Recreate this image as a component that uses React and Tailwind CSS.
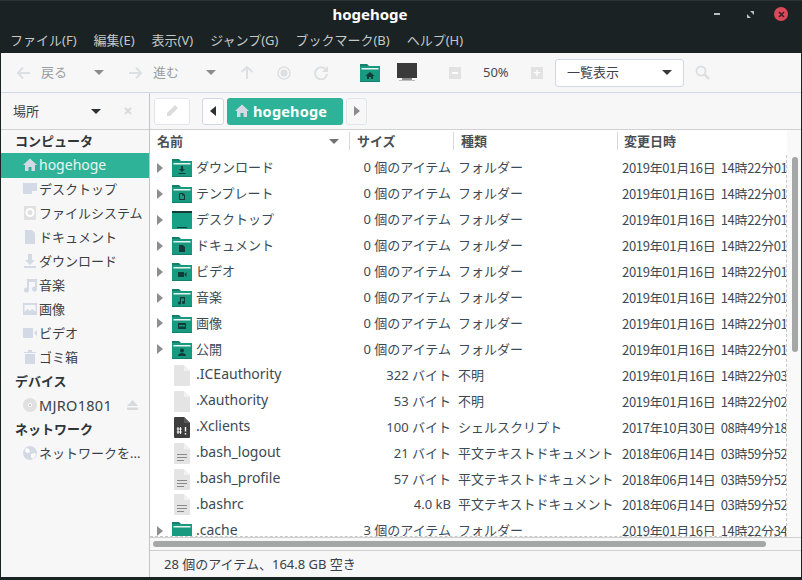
import React from "react";

const menus = ["ファイル(F)", "編集(E)", "表示(V)", "ジャンプ(G)", "ブックマーク(B)", "ヘルプ(H)"];

function Tri({ dir = "down", className = "" }) {
  const pts = { down: "0,0 10,0 5,5", left: "6,0 6,10 0,5", right: "0,0 6,5 0,10" };
  const box = dir === "down" ? [10, 5] : [6, 10];
  return (
    <svg width={box[0]} height={box[1]} viewBox={`0 0 ${box[0]} ${box[1]}`} className={className}>
      <polygon points={pts[dir]} fill="currentColor" />
    </svg>
  );
}

function Folder({ glyph }) {
  return (
    <svg width="20" height="19" viewBox="0 0 20 19" className="shrink-0">
      {glyph === "desktop" ? (
        <>
          <rect x="0" y="1" width="20" height="18" fill="#16a085" />
          <rect x="0" y="1" width="20" height="2" fill="#123b3a" />
          <rect x="5" y="17" width="10" height="1" fill="#123b3a" />
        </>
      ) : (
        <>
          <path d="M0 1h7l2 2h11v2H0z" fill="#14806c" />
          <rect x="0" y="3" width="20" height="16" rx="0.5" fill="#179a80" />
          <rect x="1.5" y="5" width="17" height="1.5" fill="#e8f3f0" />
          <rect x="0" y="18" width="20" height="1" fill="#12806c" />
          {glyph === "down" && <path d="M9 8h2v3h2l-3 3-3-3h2zM6.5 15h7v1h-7z" fill="#123b3a" />}
          {glyph === "doc" && <path d="M7 9h4l2 2v5H7zM8 10v5h4v-3.5h-2V10z" fill="#123b3a" />}
          {glyph === "docfull" && <path d="M7 9h4l2 2v5H7z" fill="#123b3a" />}
          {glyph === "video" && <path d="M6 10h6v5H6zM12.5 12l2-2v5l-2-2z" fill="#123b3a" />}
          {glyph === "music" && <path d="M8 9h5v5.5a1.5 1.5 0 1 1-1-1.4V10.5H9v4.5a1.5 1.5 0 1 1-1-1.4z" fill="#123b3a" />}
          {glyph === "image" && <path d="M6 9h8v6H6zM7 11v1.5h6V11z" fill="#123b3a" />}
          {glyph === "share" && <path d="M10 8.5a2 2 0 1 1 0 4 2 2 0 0 1 0-4zM6 16c0-2 2-3 4-3s4 1 4 3z" fill="#123b3a" />}
          {glyph === "home" && <path d="M10 9l4.500 4H13v3h-2v-2H9v2H7v-3H5.500z" fill="#123b3a" />}
        </>
      )}
    </svg>
  );
}

function FileIcon({ kind }) {
  const body = kind === "script" ? "#3d3d3d" : "#e4e4e4";
  return (
    <svg width="16" height="21" viewBox="0 0 16 21" className="shrink-0">
      <path d="M1 0h9l6 6v14a1 1 0 0 1-1 1H1a1 1 0 0 1-1-1V1a1 1 0 0 1 1-1z" fill={body} />
      <path d="M10 0l6 6h-6z" fill={kind === "script" ? "#5a5a5a" : "#f1f1f1"} />
      {kind === "text" && <path d="M3 11h10v1H3zM3 14h10v1H3zM3 17h7v1H3z" fill="#8a8a8a" />}
      {kind === "script" && (
        <>
          <path d="M4 10v7M6.500 10v7M2.800 12h5M2.800 15h5" stroke="#fff" strokeWidth="1" fill="none" />
          <path d="M11.500 10v4.500M11.500 16v1.500" stroke="#fff" strokeWidth="1.400" fill="none" />
        </>
      )}
    </svg>
  );
}

function SideIcon({ kind, color = "#d3dae6" }) {
  const shapes = {
    home: <path d="M8 1.500L15 8h-2v6H9.500v-4h-3v4H3V8H1z" fill={color} />,
    desktop: <path d="M1 2h14v11H1zM10 10v3h5v-3z" fillRule="evenodd" fill={color} />,
    disk: (
      <>
        <rect x="2" y="1" width="12" height="14" rx="1" fill="#e0e0e0" />
        <circle cx="8" cy="7.500" r="3.500" fill="none" stroke="#fff" strokeWidth="2" />
      </>
    ),
    doc: <path d="M3 1h7l3 3v11H3z" fill={color} />,
    down: <path d="M6 1h4v6h3l-5 5-5-5h3zM2 13h12v2H2z" fill={color} />,
    music: <path d="M5 2h10v10a2.500 2.500 0 1 1-2-2.400V5H7v8a2.500 2.500 0 1 1-2-2.400z" fill={color} />,
    image: <path d="M1 2h14v12H1zM2.500 11l3-3 2.500 2 2.500-2 3 3v-7h-11z" fillRule="evenodd" fill={color} />,
    video: <path d="M1 3h10v10H1zM12 8l3-3v6z" fill={color} />,
    trash: <path d="M3 5h10v10H3zM2 3h4V1h4v2h4v1H2z" fill={color} />,
    cd: (
      <>
        <circle cx="8" cy="8" r="7" fill="#e0e0e0" />
        <circle cx="8" cy="8" r="2" fill="#fff" />
        <circle cx="8" cy="8" r="1" fill="#b8b8b8" />
      </>
    ),
    globe: (
      <>
        <circle cx="8" cy="8" r="7" fill="#d3dae6" />
        <path d="M4 3l3 1 1 3-3 1-2-2zM9 9l4-1 1 2-3 4-2-2z" fill="#fff" />
      </>
    ),
  };
  return (
    <svg width="16" height="16" viewBox="0 0 16 16" className="shrink-0">
      {shapes[kind]}
    </svg>
  );
}

const places = [
  ["desktop", "デスクトップ"],
  ["disk", "ファイルシステム"],
  ["doc", "ドキュメント"],
  ["down", "ダウンロード"],
  ["music", "音楽"],
  ["image", "画像"],
  ["video", "ビデオ"],
  ["trash", "ゴミ箱"],
];

function SideRow({ icon, label, right, latin }) {
  return (
    <div className="flex items-center h-6 pb-[2px] pl-[21px] text-[#3b4045]">
      <SideIcon kind={icon} />
      <span className={latin ? "ml-[1px] flex-1 text-[14.5px] tracking-[0.3px]" : "ml-[1px] flex-1"}>{label}</span>
      {right}
    </div>
  );
}

function SideHead({ children }) {
  return <div className="h-6 pb-[2px] pl-[14px] flex items-center font-bold text-[#2f3438]">{children}</div>;
}

const A = "2019年01月16日  14時22分01";
const rows = [
  ["down", "ダウンロード", "0 個のアイテム", "フォルダー", A],
  ["doc", "テンプレート", "0 個のアイテム", "フォルダー", A],
  ["desktop", "デスクトップ", "0 個のアイテム", "フォルダー", A],
  ["docfull", "ドキュメント", "0 個のアイテム", "フォルダー", A],
  ["video", "ビデオ", "0 個のアイテム", "フォルダー", A],
  ["music", "音楽", "0 個のアイテム", "フォルダー", A],
  ["image", "画像", "0 個のアイテム", "フォルダー", A],
  ["share", "公開", "0 個のアイテム", "フォルダー", A],
  ["blank", ".ICEauthority", "322 バイト", "不明", "2019年01月16日  14時22分03"],
  ["blank", ".Xauthority", "53 バイト", "不明", "2019年01月16日  14時22分02"],
  ["script", ".Xclients", "100 バイト", "シェルスクリプト", "2017年10月30日  08時49分18"],
  ["text", ".bash_logout", "21 バイト", "平文テキストドキュメント", "2018年06月14日  03時59分52"],
  ["text", ".bash_profile", "57 バイト", "平文テキストドキュメント", "2018年06月14日  03時59分52"],
  ["text", ".bashrc", "4.0 kB", "平文テキストドキュメント", "2018年06月14日  03時59分52"],
  ["cache", ".cache", "3 個のアイテム", "フォルダー", "2019年01月16日  14時22分34"],
];

function Row({ row }) {
  const [icon, name, size, type, date] = row;
  const isFile = ["blank", "script", "text"].includes(icon);
  return (
    <div className="grid grid-cols-[200px_104px_164px_169px] h-[25.93px] shrink-0 items-center text-[#3b4a55] whitespace-pre">
      <div className="flex items-center">
        {isFile ? (
          <div className="w-[46px] pl-[24px]">
            <FileIcon kind={icon} />
          </div>
        ) : (
          <div className="w-[46px] flex items-center">
            <Tri dir="right" className="ml-[7px] mr-[9px] text-[#8b8f92]" />
            <Folder glyph={icon} />
          </div>
        )}
        <span className={name.startsWith(".") ? "text-[14px] pb-[2px]" : ""}>{name}</span>
      </div>
      <div className="text-right pr-[3px]">{size}</div>
      <div className="pl-[4px] overflow-hidden">{type}</div>
      <div className="pl-[4px] overflow-hidden tracking-[-0.3px]" style={{ fontFamily: '"Noto Sans CJK JP", sans-serif' }}>{date}</div>
    </div>
  );
}

function Head({ w, children, arrow }) {
  return (
    <div className="flex items-center h-[18px] border-r border-[#d8d8d8] pl-[7px] pr-[10px] font-bold text-[#4a4f53] shrink-0" style={{ width: w }}>
      <span className="flex-1">{children}</span>
      {arrow && <Tri className="text-[#6f7376]" />}
    </div>
  );
}

export default function App() {
  return (
    <div
      className="w-[802px] h-[580px] bg-[#1b2224] flex flex-col overflow-hidden text-[13px] leading-none"
      style={{ fontFamily: '"Noto Sans", "Noto Sans CJK JP", sans-serif' }}
    >
      {/* title */}
      <div className="h-[27px] flex items-center shrink-0 border-t border-[#2c3335]">
        <div className="w-[740px] text-center font-bold text-white text-[15px]">hogehoge</div>
        <div className="flex items-center text-[#c8cccc]">
          <div className="w-[6px] h-[2px] bg-[#b8bcbc] mr-[27px] -ml-[26px]" />
          <svg width="7" height="7" viewBox="0 0 7 7" className="mr-[20px]">
            <path d="M7 0v4L3 0zM0 7V3l4 4z" fill="#b8bcbc" />
          </svg>
          <div className="w-[14px] h-[14px] rounded-full bg-[#d9495a] flex items-center justify-center">
            <svg width="7" height="7" viewBox="0 0 7 7">
              <path d="M1 1l5 5M6 1l-5 5" stroke="#3a2226" strokeWidth="1.600" />
            </svg>
          </div>
        </div>
      </div>

      {/* menu */}
      <div className="h-[26px] flex items-center pl-[10px] gap-[17px] text-[#c4c8c8] shrink-0">
        {menus.map((m) => (
          <span key={m}>{m}</span>
        ))}
      </div>

      {/* main window */}
      <div className="mx-px bg-[#f7f7f7] flex-1 flex flex-col min-h-0 w-[800px]">
        {/* toolbar */}
        <div className="h-[40px] flex items-center border-b border-[#cfd8e6] shrink-0 text-[#9a9d9f]">
          <svg width="14" height="12" viewBox="0 0 14 12" className="ml-[16px]">
            <path d="M6 0.500L1 6l5 5.500M1 6h12" stroke="#dde0e3" strokeWidth="2" fill="none" />
          </svg>
          <span className="ml-[10px] w-[26px]">戻る</span>
          <Tri className="ml-[27px] text-[#8a8d90]" />
          <svg width="14" height="12" viewBox="0 0 14 12" className="ml-[24px]">
            <path d="M8 0.500L13 6l-5 5.500M13 6H1" stroke="#dde0e3" strokeWidth="2" fill="none" />
          </svg>
          <span className="ml-[11px] w-[26px]">進む</span>
          <Tri className="ml-[27px] text-[#8a8d90]" />
          <svg width="12" height="14" viewBox="0 0 12 14" className="ml-[25px]">
            <path d="M0.500 6L6 1l5.500 5M6 1v12" stroke="#dde0e3" strokeWidth="2" fill="none" />
          </svg>
          <svg width="14" height="14" viewBox="0 0 14 14" className="ml-[24px]">
            <circle cx="7" cy="7" r="6" fill="none" stroke="#dde0e3" strokeWidth="1.500" />
            <circle cx="7" cy="7" r="3.500" fill="#dde0e3" />
          </svg>
          <svg width="14" height="14" viewBox="0 0 14 14" className="ml-[23px]">
            <path d="M12 4A6 6 0 1 0 13 8" fill="none" stroke="#dde0e3" strokeWidth="2" />
            <path d="M14 0v6H8z" fill="#dde0e3" />
          </svg>
          <div className="ml-[32px]">
            <Folder glyph="home" />
          </div>
          <svg width="20" height="19" viewBox="0 0 20 19" className="ml-[17px]">
            <rect width="20" height="15" fill="#3a3a3a" />
            <rect x="5" y="15" width="10" height="2" fill="#8c8c8c" />
            <rect x="2" y="17" width="16" height="1" fill="#bdbdbd" />
          </svg>
          <div className="ml-[32px] w-[12px] h-[12px] bg-[#e2e2e2] flex items-center justify-center">
            <div className="w-[6px] h-[2px] bg-white" />
          </div>
          <span className="ml-[22px] w-[26px] text-[#474b4f]">50%</span>
          <div className="ml-[22px] w-[12px] h-[12px] bg-[#e2e2e2] flex items-center justify-center text-white text-[12px] font-bold">+</div>
          <div className="ml-[12px] w-[129px] h-[28px] bg-white border border-[#cfd8e6] rounded-[3px] flex items-center justify-between pl-[11px] pr-[11px] text-[#3b4045]">
            <span>一覧表示</span>
            <Tri className="text-[#35393c]" />
          </div>
          <svg width="15" height="15" viewBox="0 0 15 15" className="ml-[11px]">
            <circle cx="6" cy="6" r="4.500" fill="none" stroke="#dde0e3" strokeWidth="2" />
            <path d="M9.500 9.500L14 14" stroke="#dde0e3" strokeWidth="2.500" />
          </svg>
        </div>

        <div className="flex-1 flex min-h-0">
          {/* sidebar */}
          <div className="w-[148px] shrink-0 flex flex-col">
            <div className="h-[37px] flex items-center pl-[12px] border-b border-[#d0d0d0] text-[#3b4045] shrink-0">
              <span className="w-[78px]">場所</span>
              <Tri className="text-[#2d3033]" />
              <svg width="8" height="8" viewBox="0 0 8 8" className="ml-[23px]">
                <path d="M1 1l6 6M7 1L1 7" stroke="#d8dadc" strokeWidth="2" />
              </svg>
            </div>
            <div>
              <div className="h-[23px] pl-[14px] flex items-center font-bold text-[#2f3438]">コンピュータ</div>
              <div className="h-[25px] pb-[2px] bg-[#2eb398] text-[#e8f6f3] flex items-center pl-[21px]">
                <SideIcon kind="home" color="#d3dae6" />
                <span className="ml-[1px] text-[14px]">hogehoge</span>
              </div>
              {places.map(([i, l]) => (
                <SideRow key={l} icon={i} label={l} />
              ))}
              <SideHead>デバイス</SideHead>
              <SideRow
                icon="cd"
                latin
                label="MJRO1801"
                right={
                  <svg width="11" height="10" viewBox="0 0 11 10" className="mr-[11px]">
                    <path d="M5.500 0L11 6H0zM0 7.500h11V10H0z" fill="#d8dadc" />
                  </svg>
                }
              />
              <SideHead>ネットワーク</SideHead>
              <SideRow icon="globe" label="ネットワークを..." />
            </div>
          </div>

          {/* right */}
          <div className="flex-1 flex flex-col min-w-0 border-l border-[#c4c4c4]">
            {/* path bar */}
            <div className="h-[37px] flex items-center pl-[4px] border-b border-[#d0d0d0] shrink-0">
              <div className="w-[36px] h-[27px] bg-white border border-[#e2e6ec] rounded-[3px] flex items-center justify-center">
                <svg width="14" height="14" viewBox="0 0 14 14">
                  <path d="M10 1l3 3-8 8H2V9zM0 13h0" fill="#dcdcdc" />
                </svg>
              </div>
              <div className="ml-[12px] w-[22px] h-[27px] bg-white border border-[#cfd8e6] rounded-[3px] flex items-center justify-center">
                <Tri dir="left" className="text-[#2d3033]" />
              </div>
              <div className="ml-[3px] w-[116px] h-[27px] bg-[#2eb398] rounded-[3px] flex items-center pl-[7px] text-white font-bold text-[14.5px]">
                <SideIcon kind="home" color="#d3dae6" />
                <span className="ml-[3px] tracking-[0.2px]">hogehoge</span>
              </div>
              <div className="ml-[3px] w-[21px] h-[27px] bg-[#f7f7f7] border border-[#e2e6ec] rounded-[3px] flex items-center justify-center">
                <Tri dir="right" className="text-[#8a8d90]" />
              </div>
            </div>

            {/* list */}
            <div className="flex-1 flex min-h-0 bg-white">
              <div className="w-[637px] shrink-0 flex flex-col overflow-hidden border-b border-dashed border-[#c8c8c8]">
                <div className="h-[25px] pb-[3px] flex items-center shrink-0">
                  <Head w={200} arrow>名前</Head>
                  <Head w={104}>サイズ</Head>
                  <Head w={164}>種類</Head>
                  <div className="pl-[6px] font-bold text-[#4a4f53]">変更日時</div>
                </div>
                <div className="flex-1 min-h-0 flex flex-col overflow-hidden border-r border-dashed border-[#c8c8c8]">
                  {rows.map((r) => (
                    <Row key={r[1]} row={r} />
                  ))}
                </div>
              </div>
              <div className="flex-1 pt-[27px] pl-[5px] bg-[#f9f9f9]">
                <div className="w-[6px] h-[195px] rounded-[3px] bg-[#a3a7a6]" />
              </div>
            </div>

            {/* h scroll */}
            <div className="h-[13px] bg-[#f7f7f7] border-t border-[#d0d0d0] shrink-0 flex items-center">
              <div className="ml-[3px] w-[613px] h-[6px] rounded-[3px] bg-[#a3a7a6]" />
            </div>

            {/* status */}
            <div className="h-[27px] border-t border-[#d0d0d0] shrink-0 flex items-center pl-[14px] text-[#3b4045]">
              28 個のアイテム、164.8 GB 空き
            </div>
          </div>
        </div>
      </div>
      <div className="h-[3px] shrink-0" />
    </div>
  );
}
